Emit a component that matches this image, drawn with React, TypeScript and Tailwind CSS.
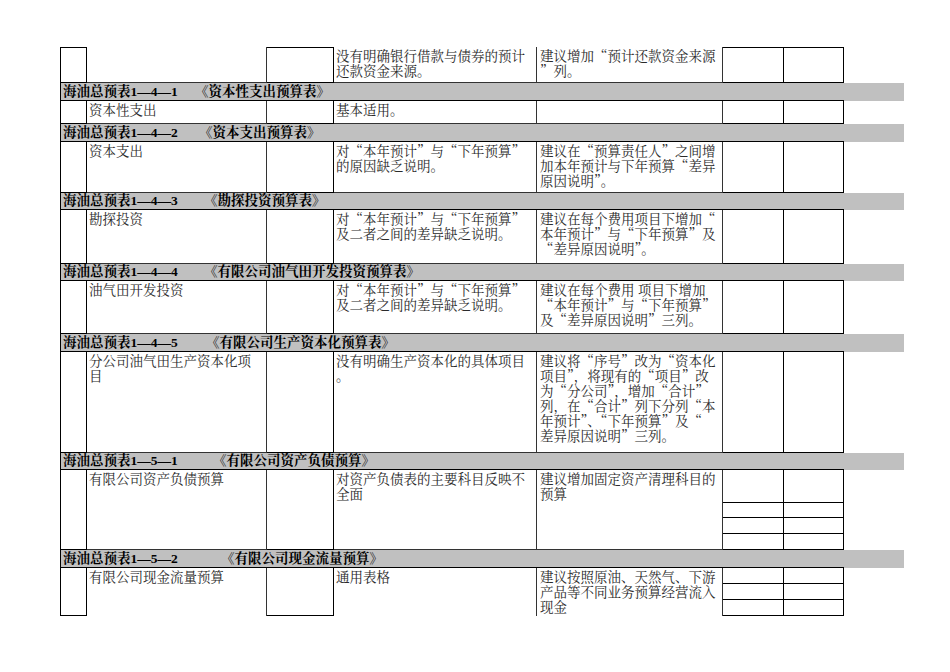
import React from "react";

const body = { fontFamily: '"Noto Serif CJK SC", "Noto Sans CJK SC", "Liberation Serif", serif' };
const head = { fontFamily: '"Liberation Serif", "Noto Serif CJK SC", "Noto Sans CJK SC", serif' };

type Row = {
  h: string;
  a: string[];
  c4: string[];
  d: string[];
  sub?: string[];
  first?: boolean;
  last?: boolean;
};

type Section = { left: string; right: string; ml: string; h: string };

function Lines({ lines, pl }: { lines: string[]; pl: string }) {
  if (!lines.length) return null;
  return (
    <div className={`${pl} pt-[1px] text-[13.5px] leading-[15px] text-[#2a2a2a] whitespace-pre`} style={body}>
      {lines.join("\n")}
    </div>
  );
}

function Header({ s }: { s: Section }) {
  return (
    <div className={`flex ${s.h}`}>
      <div
        className="w-[784px] border-l border-b border-black bg-[#c0c0c0] flex items-center pl-[2px] text-[13.5px] font-bold text-black leading-none"
        style={head}
      >
        <span className="w-[132px] whitespace-nowrap">{s.left}</span>
        <span className={`${s.ml} whitespace-nowrap`}>{s.right}</span>
      </div>
      <div className="w-[60px] bg-[#c0c0c0]" />
    </div>
  );
}

function DataRow({ r }: { r: Row }) {
  const top = r.first ? "border-t" : "";
  const bAll = r.last ? "" : "border-b";
  return (
    <div className={`grid grid-cols-[27px_180px_67px_203px_186px_121px] ${r.h}`}>
      <div className={`border-l border-r border-b border-black ${top}`} />
      <div className={`border-r border-[#333] ${bAll}`}>
        <Lines lines={r.a} pl="pl-[2px]" />
      </div>
      <div className={`border-r border-b border-black ${top}`} />
      <div className={`border-r border-[#333] ${bAll}`}>
        <Lines lines={r.c4} pl="pl-[2px]" />
      </div>
      <div className={`border-r border-[#333] ${bAll}`}>
        <Lines lines={r.d} pl="pl-[3px]" />
      </div>
      <div className={`flex flex-col ${top} border-black`}>
        {(r.sub ?? ["flex-1"]).map((s, i) => (
          <div key={i} className={`grid grid-cols-[61px_60px] ${s}`}>
            <div className="border-r border-b border-black" />
            <div className="border-r border-b border-black" />
          </div>
        ))}
      </div>
    </div>
  );
}

export default function App() {
  const rows: Row[] = [
    {
      h: "h-[36px]",
      first: true,
      a: [],
      c4: ["没有明确银行借款与债券的预计", "还款资金来源。"],
      d: ["建议增加“预计还款资金来源", "”列。"],
    },
    { h: "h-[23px]", a: ["资本性支出"], c4: ["基本适用。"], d: [] },
    {
      h: "h-[51px]",
      a: ["资本支出"],
      c4: ["对“本年预计”与“下年预算”", "的原因缺乏说明。"],
      d: ["建议在“预算责任人”之间增", "加本年预计与下年预算“差异", "原因说明”。"],
    },
    {
      h: "h-[54px]",
      a: ["勘探投资"],
      c4: ["对“本年预计”与“下年预算”", "及二者之间的差异缺乏说明。"],
      d: ["建议在每个费用项目下增加“", "本年预计”与“下年预算”及", "“差异原因说明”。"],
    },
    {
      h: "h-[53px]",
      a: ["油气田开发投资"],
      c4: ["对“本年预计”与“下年预算”", "及二者之间的差异缺乏说明。"],
      d: ["建议在每个费用 项目下增加", "“本年预计”与“下年预算”", "及“差异原因说明”三列。"],
    },
    {
      h: "h-[101px]",
      a: ["分公司油气田生产资本化项", "目"],
      c4: ["没有明确生产资本化的具体项目", "。"],
      d: [
        "建议将“序号”改为“资本化",
        "项目”，将现有的“项目”改",
        "为“分公司”，增加“合计”",
        "列，在“合计”列下分列“本",
        "年预计”、“下年预算”及“",
        "差异原因说明”三列。",
      ],
    },
    {
      h: "h-[80px]",
      a: ["有限公司资产负债预算"],
      c4: ["对资产负债表的主要科目反映不", "全面"],
      d: ["建议增加固定资产清理科目的", "预算"],
      sub: ["h-[33px]", "h-[15px]", "h-[16px]", "h-[16px]"],
    },
    {
      h: "h-[48px]",
      last: true,
      a: ["有限公司现金流量预算"],
      c4: ["通用表格"],
      d: ["建议按照原油、天然气、下游", "产品等不同业务预算经营流入", "现金"],
      sub: ["h-[16px]", "h-[16px]", "h-[16px]"],
    },
  ];

  const sections: Section[] = [
    { left: "海油总预表1—4—1", right: "《资本性支出预算表》", ml: "ml-[0px]", h: "h-[18px]" },
    { left: "海油总预表1—4—2", right: "《资本支出预算表》", ml: "ml-[4px]", h: "h-[18px]" },
    { left: "海油总预表1—4—3", right: "《勘探投资预算表》", ml: "ml-[9px]", h: "h-[17px]" },
    { left: "海油总预表1—4—4", right: "《有限公司油气田开发投资预算表》", ml: "ml-[9px]", h: "h-[17px]" },
    { left: "海油总预表1—4—5", right: "《有限公司生产资本化预算表》", ml: "ml-[11px]", h: "h-[18px]" },
    { left: "海油总预表1—5—1", right: "《有限公司资产负债预算》", ml: "ml-[18px]", h: "h-[17px]" },
    { left: "海油总预表1—5—2", right: "《有限公司现金流量预算》", ml: "ml-[26px]", h: "h-[18px]" },
  ];

  return (
    <div className="w-[950px] h-[672px] bg-white pt-[47px] pl-[60px]">
      <div className="w-[844px] flex flex-col">
        {rows.map((r, i) => (
          <React.Fragment key={i}>
            <DataRow r={r} />
            {i < sections.length && <Header s={sections[i]} />}
          </React.Fragment>
        ))}
      </div>
    </div>
  );
}
